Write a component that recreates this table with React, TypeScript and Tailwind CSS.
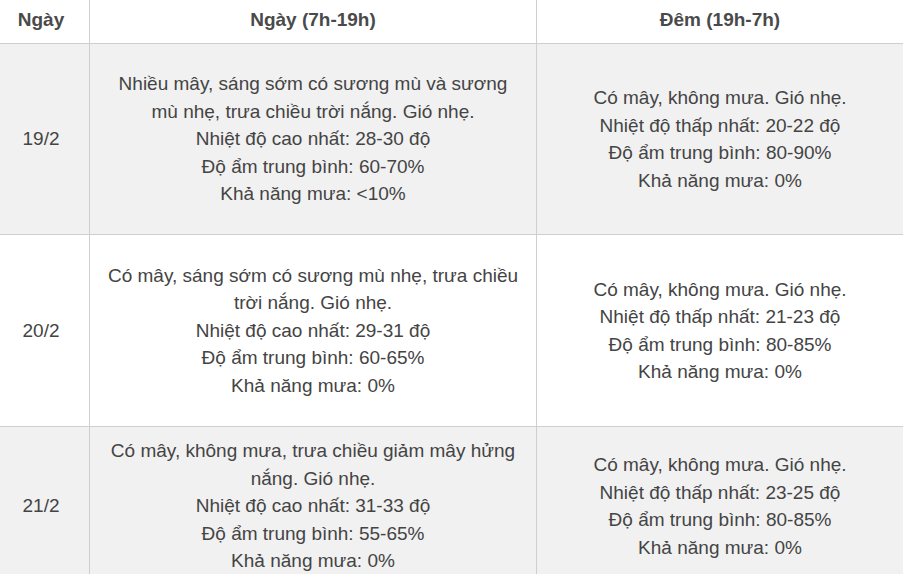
const rows = [
  {
    date: '19/2',
    day: [
      'Nhiều mây, sáng sớm có sương mù và sương',
      'mù nhẹ, trưa chiều trời nắng. Gió nhẹ.',
      'Nhiệt độ cao nhất: 28-30 độ',
      'Độ ẩm trung bình: 60-70%',
      'Khả năng mưa: <10%',
    ],
    night: [
      'Có mây, không mưa. Gió nhẹ.',
      'Nhiệt độ thấp nhất: 20-22 độ',
      'Độ ẩm trung bình: 80-90%',
      'Khả năng mưa: 0%',
    ],
    shaded: true,
    height: 'h-[191px]',
  },
  {
    date: '20/2',
    day: [
      'Có mây, sáng sớm có sương mù nhẹ, trưa chiều',
      'trời nắng. Gió nhẹ.',
      'Nhiệt độ cao nhất: 29-31 độ',
      'Độ ẩm trung bình: 60-65%',
      'Khả năng mưa: 0%',
    ],
    night: [
      'Có mây, không mưa. Gió nhẹ.',
      'Nhiệt độ thấp nhất: 21-23 độ',
      'Độ ẩm trung bình: 80-85%',
      'Khả năng mưa: 0%',
    ],
    shaded: false,
    height: 'h-[192px]',
  },
  {
    date: '21/2',
    day: [
      'Có mây, không mưa, trưa chiều giảm mây hửng',
      'nắng. Gió nhẹ.',
      'Nhiệt độ cao nhất: 31-33 độ',
      'Độ ẩm trung bình: 55-65%',
      'Khả năng mưa: 0%',
    ],
    night: [
      'Có mây, không mưa. Gió nhẹ.',
      'Nhiệt độ thấp nhất: 23-25 độ',
      'Độ ẩm trung bình: 80-85%',
      'Khả năng mưa: 0%',
    ],
    shaded: true,
    height: 'h-[159px]',
  },
]

function Lines({ lines }: { lines: string[] }) {
  return (
    <div>
      {lines.map((l, i) => (
        <div key={i}>{l}</div>
      ))}
    </div>
  )
}

export default function App() {
  return (
    <div
      className="w-[903px] h-[574px] overflow-hidden bg-white text-[19px] leading-[27.5px] text-[#444]"
      style={{ fontFamily: '"Liberation Sans", Arial, sans-serif' }}
    >
      <div className="grid grid-cols-[90px_447px_1fr] h-[44px] border-b border-[#cfcfcf] font-bold text-[#4a4a4a]">
        <div className="flex items-center justify-center border-r border-[#cfcfcf] pb-[4px] pr-[7px]">Ngày</div>
        <div className="flex items-center justify-center border-r border-[#cfcfcf] pb-[4px]">Ngày (7h-19h)</div>
        <div className="flex items-center justify-center pb-[4px]">Đêm (19h-7h)</div>
      </div>
      {rows.map((r) => (
        <div
          key={r.date}
          className={`grid grid-cols-[90px_447px_1fr] border-b border-[#cfcfcf] text-center ${r.height} ${r.shaded ? 'bg-[#f1f1f1]' : 'bg-white'}`}
        >
          <div className="flex items-center justify-center border-r border-[#cfcfcf] pr-[7px]">{r.date}</div>
          <div className="flex items-center justify-center border-r border-[#cfcfcf]">
            <Lines lines={r.day} />
          </div>
          <div className="flex items-center justify-center">
            <Lines lines={r.night} />
          </div>
        </div>
      ))}
    </div>
  )
}
